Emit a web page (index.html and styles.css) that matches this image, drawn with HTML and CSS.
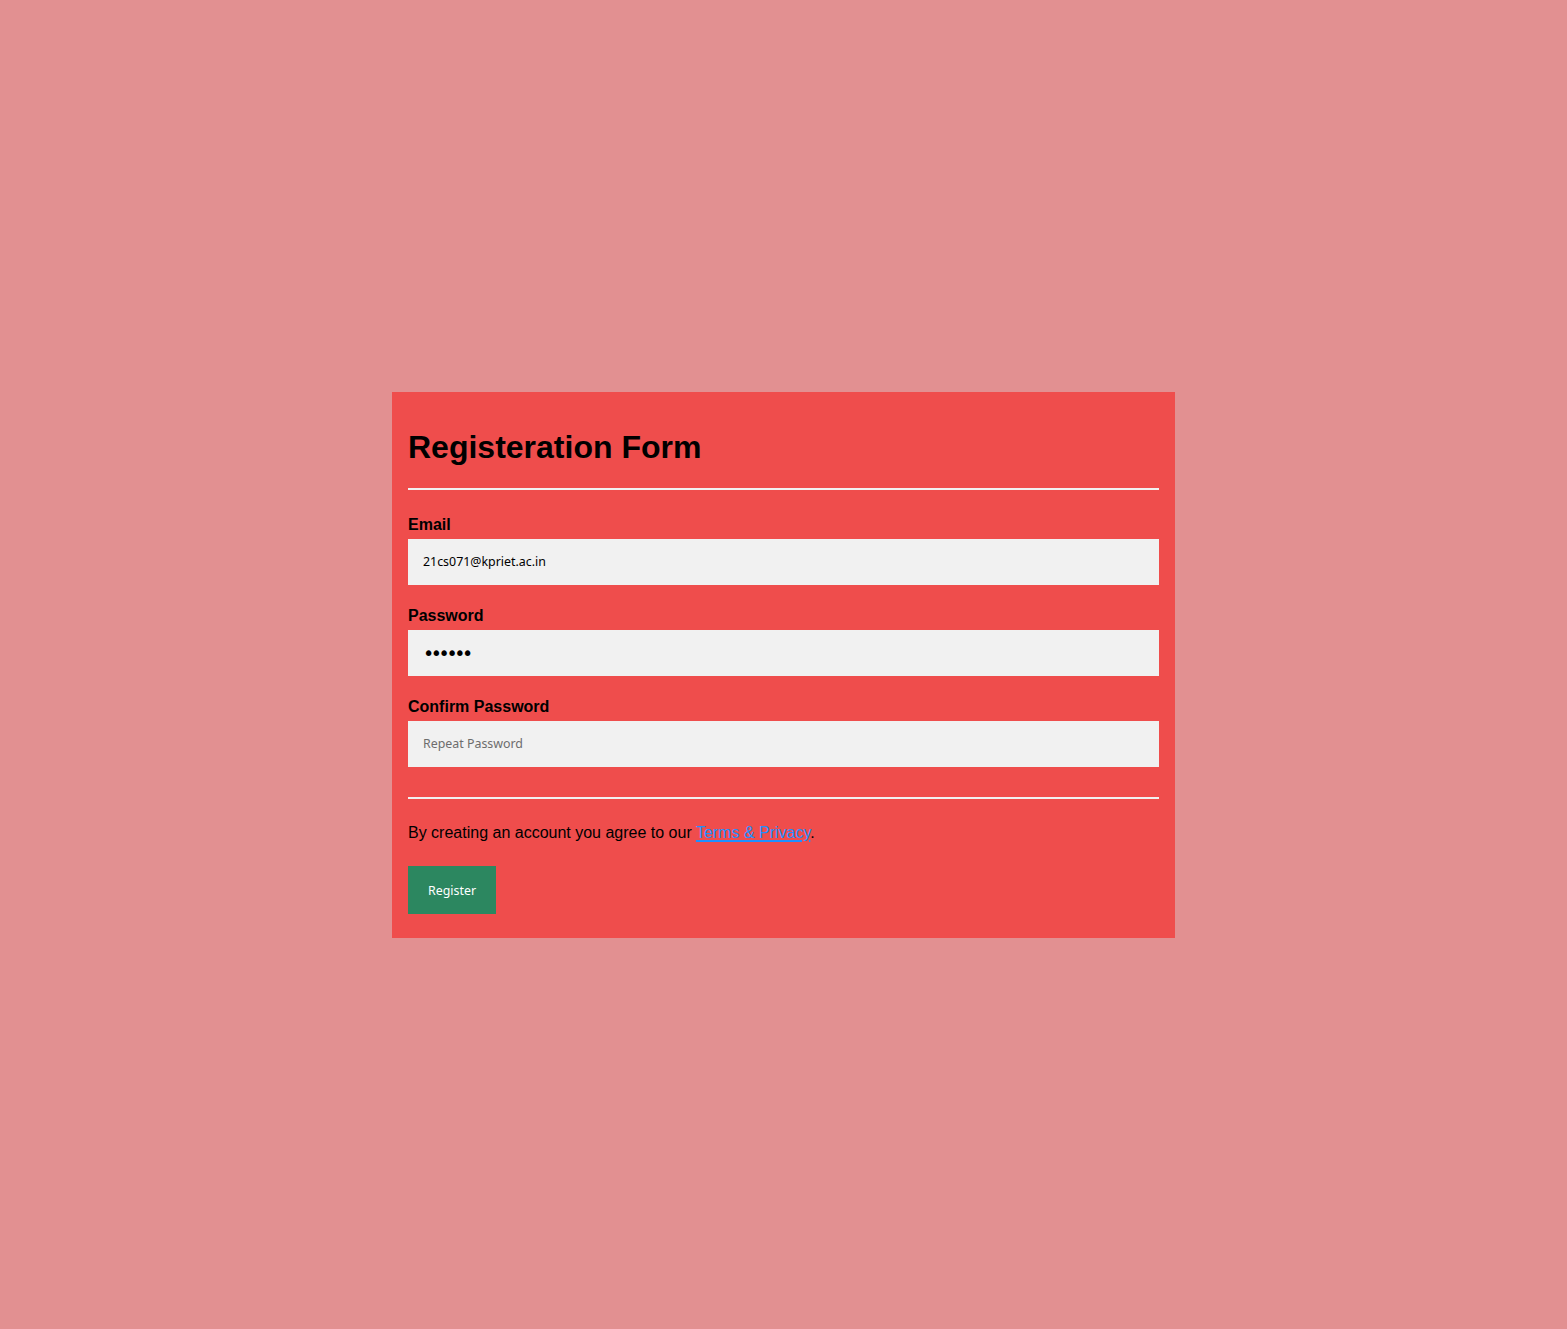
FILE: index.html
```
<!DOCTYPE html>
<html>
<head>
<meta charset="utf-8">
<title>Registration</title>
<link rel="stylesheet" href="styles.css">
</head>
<body>
<form class="card">
  <h1 class="title">Registeration Form</h1>
  <hr class="rule rule-top">
  <label class="label" for="email">Email</label>
  <input class="field" id="email" type="text" value="21cs071@kpriet.ac.in">
  <label class="label" for="psw">Password</label>
  <input class="field field-pass" id="psw" type="password" value="123456">
  <label class="label" for="psw2">Confirm Password</label>
  <input class="field" id="psw2" type="password" placeholder="Repeat Password">
  <hr class="rule rule-bottom">
  <p class="terms">By creating an account you agree to our <a class="link" href="#">Terms &amp; Privacy</a>.</p>
  <button class="btn" type="button">Register</button>
</form>
</body>
</html>
```
FILE: styles.css
```
html, body {
  margin: 0;
  padding: 0;
}
body {
  background: #e29091;
  font-family: "Liberation Sans", Arial, sans-serif;
  font-size: 16px;
  min-height: 100vh;
  display: flex;
  align-items: center;
  justify-content: center;
}
.card {
  width: 783px;
  box-sizing: border-box;
  background: #ef4d4c;
  padding: 16px;
  display: flex;
  flex-direction: column;
  align-items: flex-start;
}
.title {
  font-size: 32px;
  font-weight: bold;
  margin: 21px 0 22px;
  line-height: 37px;
  color: #000;
}
.rule {
  width: 100%;
  box-sizing: border-box;
  border: 1px solid #f1f1f1;
  margin: 0 0 25px;
}
.rule-top {
  margin-bottom: 26px;
}
.rule-bottom {
  margin-top: 8px;
}
.label {
  font-weight: bold;
  color: #000;
  line-height: 18px;
  margin-bottom: 5px;
}
.field {
  width: 100%;
  box-sizing: border-box;
  height: 46px;
  padding: 15px;
  margin: 0 0 22px;
  border: none;
  background: #f1f1f1;
  font-family: "Noto Sans", "Open Sans", sans-serif;
  font-size: 12.4px;
  color: #000;
  outline: none;
}
.field::placeholder {
  color: #6d6d6d;
}
.field-pass {
  padding: 0 15px;
  font-family: "DejaVu Sans", sans-serif;
  font-size: 19px;
  letter-spacing: -3.4px;
}
.terms {
  margin: 0 0 24px;
  line-height: 18px;
  color: #000;
}
.link {
  color: #1e90ff;
  text-decoration-line: underline;
  text-decoration-style: solid;
  text-decoration-color: #1e90ff;
  text-decoration-thickness: 1.5px;
  text-underline-offset: 2px;
}
.btn {
  background: #2c8760;
  color: #fff;
  border: none;
  padding: 16px 20px;
  height: 48px;
  font-family: "Noto Sans", "Open Sans", sans-serif;
  font-size: 12.4px;
  margin: 0 0 8px;
}
```
